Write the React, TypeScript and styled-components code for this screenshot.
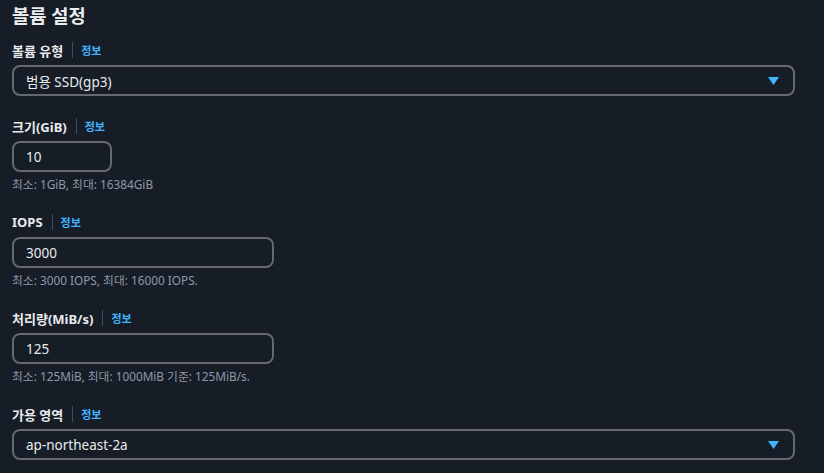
import React from "react";
import styled, { createGlobalStyle } from "styled-components";

const Global = createGlobalStyle`
  html, body { margin: 0; padding: 0; background: #161d26; }
  body { font-family: "Noto Sans", "Noto Sans CJK KR", sans-serif; color: #e9ebed; }
`;

const Page = styled.div`
  width: 824px;
  height: 473px;
  box-sizing: border-box;
  padding: 3px 29px 0 12px;
  background: #161d26;
  overflow: hidden;
`;

const Heading = styled.h2`
  margin: 0 0 11px;
  font-size: 18.7px;
  line-height: 26px;
  font-weight: 700;
  color: #e9ebed;
`;

const Field = styled.div<{ $gap?: number }>`
  display: flex;
  flex-direction: column;
  margin-bottom: ${(p) => p.$gap ?? 20}px;
`;

const LabelRow = styled.div`
  display: flex;
  align-items: center;
  height: 20px;
  margin-bottom: 5px;
`;

const Label = styled.span`
  font-size: 13px;
  font-weight: 700;
  color: #e9ebed;
`;

const Divider = styled.span`
  width: 1px;
  height: 16px;
  background: #414d5c;
  margin: 0 8px 0 9px;
`;

const Info = styled.a`
  font-size: 11px;
  font-weight: 700;
  color: #42b4ff;
  text-decoration: none;
`;

const Box = styled.div<{ $w?: number }>`
  box-sizing: border-box;
  width: ${(p) => (p.$w ? `${p.$w}px` : "100%")};
  height: 31px;
  border: 2px solid #656871;
  border-radius: 8px;
  display: flex;
  align-items: center;
  justify-content: space-between;
  padding: 0 14px 0 12px;
  font-size: 13.5px;
  color: #e9ebed;
`;

const Help = styled.div`
  margin-top: 4px;
  font-size: 11.8px;
  line-height: 16px;
  color: #8d99a8;
`;

const Caret = () => (
  <svg width="11" height="8" viewBox="0 0 11 8">
    <polygon points="0,0 11,0 5.5,8" fill="#42b4ff" />
  </svg>
);

type F = { label: string; value: string; width?: number; select?: boolean; help?: string; gap?: number };

const fields: F[] = [
  { label: "볼륨 유형", value: "범용 SSD(gp3)", select: true },
  { label: "크기(GiB)", value: "10", width: 100, help: "최소: 1GiB, 최대: 16384GiB" },
  { label: "IOPS", value: "3000", width: 262, help: "최소: 3000 IOPS, 최대: 16000 IOPS." },
  { label: "처리량(MiB/s)", value: "125", width: 262, help: "최소: 125MiB, 최대: 1000MiB 기준: 125MiB/s." },
  { label: "가용 영역", value: "ap-northeast-2a", select: true, gap: 0 },
];

export default function App() {
  return (
    <>
      <Global />
      <Page>
        <Heading>볼륨 설정</Heading>
        {fields.map((f) => (
          <Field key={f.label} $gap={f.gap}>
            <LabelRow>
              <Label>{f.label}</Label>
              <Divider />
              <Info href="#">정보</Info>
            </LabelRow>
            <Box $w={f.width}>
              <span>{f.value}</span>
              {f.select && <Caret />}
            </Box>
            {f.help && <Help>{f.help}</Help>}
          </Field>
        ))}
      </Page>
    </>
  );
}
